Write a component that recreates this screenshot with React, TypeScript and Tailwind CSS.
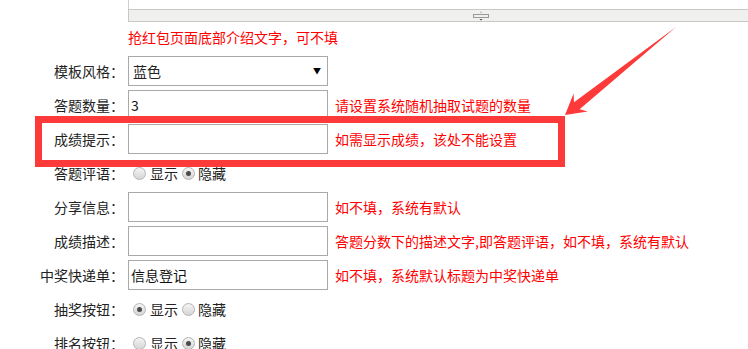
import React from "react";

type Row =
  | { kind: "input"; label: string; value?: string; hint?: string }
  | { kind: "select"; label: string; value: string }
  | { kind: "radio"; label: string; show: boolean };

const ROWS: Row[] = [
  { kind: "select", label: "模板风格：", value: "蓝色" },
  { kind: "input", label: "答题数量：", value: "3", hint: "请设置系统随机抽取试题的数量" },
  { kind: "input", label: "成绩提示：", hint: "如需显示成绩，该处不能设置" },
  { kind: "radio", label: "答题评语：", show: false },
  { kind: "input", label: "分享信息：", hint: "如不填，系统有默认" },
  { kind: "input", label: "成绩描述：", hint: "答题分数下的描述文字,即答题评语，如不填，系统有默认" },
  { kind: "input", label: "中奖快递单：", value: "信息登记", hint: "如不填，系统默认标题为中奖快递单" },
  { kind: "radio", label: "抽奖按钮：", show: true },
  { kind: "radio", label: "排名按钮：", show: false },
];

function Radio({ checked }: { checked: boolean }) {
  return (
    <span className="flex h-[13px] w-[13px] items-center justify-center rounded-full border border-[#b4b4b4] bg-gradient-to-b from-[#f4f4f4] to-[#d6d6d6]">
      {checked && <span className="h-[5px] w-[5px] rounded-full bg-[#4a4a4a]" />}
    </span>
  );
}

export default function App() {
  return (
    <div
      className="relative h-[349px] w-[748px] overflow-hidden bg-white text-[14px] text-[#222]"
      style={{ fontFamily: '"Noto Sans CJK SC", "Noto Sans", sans-serif' }}
    >
      {/* editor bottom (wider than the window) */}
      <div className="ml-[128px] w-[704px]">
        <div className="h-[9px] border-l border-[#cfcfcf]" />
        <div className="flex h-[13px] items-center justify-center border-y border-l border-[#c8c8c8] bg-[#f0f0ee]">
          <svg width="16" height="10" viewBox="0 0 16 10">
            <path d="M7 1.5 L8 0.5 L9 1.5 Z" fill="#777" />
            <rect x="0.5" y="3.5" width="15" height="3" fill="none" stroke="#999" />
            <path d="M6.5 8 L9.5 8 L8 9.5 Z" fill="#444" />
          </svg>
        </div>
      </div>

      <div className="ml-[128px] mt-[5px] h-[20px] leading-[20px] text-[#ff0000]">抢红包页面底部介绍文字，可不填</div>

      <div className="mt-[9px] flex flex-col gap-[4px]">
        {ROWS.map((r) => (
          <div key={r.label} className="flex h-[30px] items-center">
            <div className="w-[124px] shrink-0 text-right">{r.label}</div>
            <div className="ml-[4px] flex items-center">
              {r.kind === "select" && (
                <div className="flex h-[30px] w-[200px] items-center justify-between border border-[#a9a9a9] pl-[4px] pr-[6px]">
                  <span>{r.value}</span>
                  <span className="text-[8px] text-black">▼</span>
                </div>
              )}
              {r.kind === "input" && (
                <>
                  <div className="flex h-[30px] w-[200px] items-center border border-[#a9a9a9] pl-[2px] text-[#111]">
                    {r.value}
                  </div>
                  {r.hint && <span className="ml-[7px] text-[#ff0000]">{r.hint}</span>}
                </>
              )}
              {r.kind === "radio" && (
                <div className="flex items-center pl-[5px]">
                  <Radio checked={r.show} />
                  <span className="ml-[4px]">显示</span>
                  <span className="ml-[4px]">
                    <Radio checked={!r.show} />
                  </span>
                  <span className="ml-[3px]">隐藏</span>
                </div>
              )}
            </div>
          </div>
        ))}
      </div>

      {/* annotation: red frame + arrow */}
      <div className="pointer-events-none absolute left-[35px] top-[116px] h-[51px] w-[530px] border-[7px] border-[#fd3a3a]" />
      <svg className="pointer-events-none absolute left-0 top-0" width="748" height="349" viewBox="0 0 748 349">
        <polygon
          points="565,115 573.6,93.6 574,102.2 676,27 579.6,109.2 587.8,111.6"
          fill="#fd3a3a"
        />
      </svg>
    </div>
  );
}
